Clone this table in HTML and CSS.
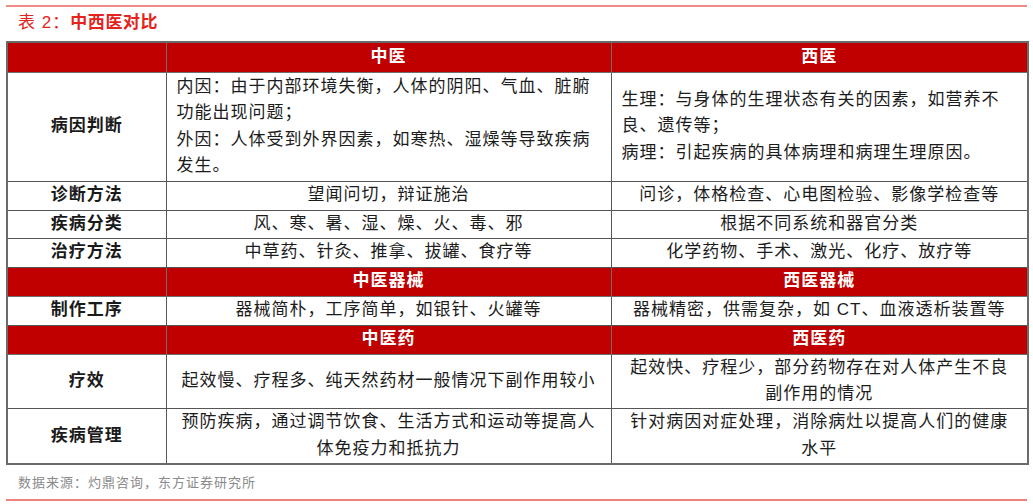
FILE: index.html
```html
<!DOCTYPE html>
<html lang="zh-CN">
<head>
<meta charset="utf-8">
<title>表 2：中西医对比</title>
<link rel="stylesheet" href="styles.css">
</head>
<body>
<div class="page">
  <div class="rule"></div>
  <h1 class="title"><span class="title-no">表 2：</span>中西医对比</h1>
  <table class="cmp">
    <colgroup>
      <col class="c-label">
      <col class="c-tcm">
      <col class="c-wm">
    </colgroup>
    <tbody>
      <tr class="head h30">
        <td></td><td>中医</td><td>西医</td>
      </tr>
      <tr class="h109">
        <th>病因判断</th>
        <td class="left">内因：由于内部环境失衡，人体的阴阳、气血、脏腑<br>功能出现问题；<br>外因：人体受到外界因素，如寒热、湿燥等导致疾病<br>发生。</td>
        <td class="left">生理：与身体的生理状态有关的因素，如营养不<br>良、遗传等；<br>病理：引起疾病的具体病理和病理生理原因。</td>
      </tr>
      <tr class="h29">
        <th>诊断方法</th><td>望闻问切，辩证施治</td><td>问诊，体格检查、心电图检验、影像学检查等</td>
      </tr>
      <tr class="h28">
        <th>疾病分类</th><td>风、寒、暑、湿、燥、火、毒、邪</td><td>根据不同系统和器官分类</td>
      </tr>
      <tr class="h29">
        <th>治疗方法</th><td>中草药、针灸、推拿、拔罐、食疗等</td><td>化学药物、手术、激光、化疗、放疗等</td>
      </tr>
      <tr class="head h29">
        <td></td><td>中医器械</td><td>西医器械</td>
      </tr>
      <tr class="h29">
        <th>制作工序</th><td>器械简朴，工序简单，如银针、火罐等</td><td>器械精密，供需复杂，如 CT、血液透析装置等</td>
      </tr>
      <tr class="head h29">
        <td></td><td>中医药</td><td>西医药</td>
      </tr>
      <tr class="h54">
        <th>疗效</th><td>起效慢、疗程多、纯天然药材一般情况下副作用较小</td><td>起效快、疗程少，部分药物存在对人体产生不良<br>副作用的情况</td>
      </tr>
      <tr class="h56">
        <th>疾病管理</th><td>预防疾病，通过调节饮食、生活方式和运动等提高人<br>体免疫力和抵抗力</td><td>针对病因对症处理，消除病灶以提高人们的健康<br>水平</td>
      </tr>
    </tbody>
  </table>
  <p class="source">数据来源：灼鼎咨询，东方证券研究所</p>
  <div class="rule bottom"></div>
</div>
</body>
</html>
```

FILE: styles.css
```css
html, body {
  margin: 0;
  padding: 0;
  background: #ffffff;
}

body {
  font-family: "Liberation Sans", "Noto Sans CJK SC", sans-serif;
  color: #1c1c1c;
}

.page {
  width: 1021px;
  padding: 5px 6px 0 6px;
}

.rule {
  height: 2px;
  background: #f08a86;
}

.title {
  margin: 0;
  height: 34px;
  line-height: 32px;
  padding-left: 12px;
  font-size: 17px;
  font-weight: bold;
  letter-spacing: 0.6px;
  color: #e5231d;
}

.title-no {
  font-weight: normal;
  letter-spacing: 1px;
}

.cmp {
  width: 1021px;
  table-layout: fixed;
  border-collapse: collapse;
  border: 2px solid #6a6a6a;
}

.c-label { width: 159px; }
.c-tcm { width: 445px; }
.c-wm { width: 417px; }

.cmp th,
.cmp td {
  border: 1px solid #555555;
  padding: 0 10px;
  font-size: 17px;
  letter-spacing: 1px;
  line-height: 26.5px;
  text-align: center;
  vertical-align: middle;
  white-space: nowrap;
}

.cmp th {
  font-weight: bold;
  color: #1a1a1a;
}

.cmp td.left {
  text-align: left;
}

.cmp tr.head td {
  background: #c00000;
  color: #ffffff;
  font-weight: bold;
  border-color: #6e6e6e;
}

.cmp tr.h30 { height: 30px; }
.cmp tr.h109 { height: 109px; }
.cmp tr.h29 { height: 29px; }
.cmp tr.h28 { height: 28px; }
.cmp tr.h54 { height: 54px; }
.cmp tr.h56 { height: 56px; }

.source {
  margin: 0;
  height: 34px;
  line-height: 36px;
  padding-left: 12px;
  font-size: 13px;
  letter-spacing: 1px;
  color: #8a8a8a;
}

.rule.bottom {
  background: #f0807c;
}
```
